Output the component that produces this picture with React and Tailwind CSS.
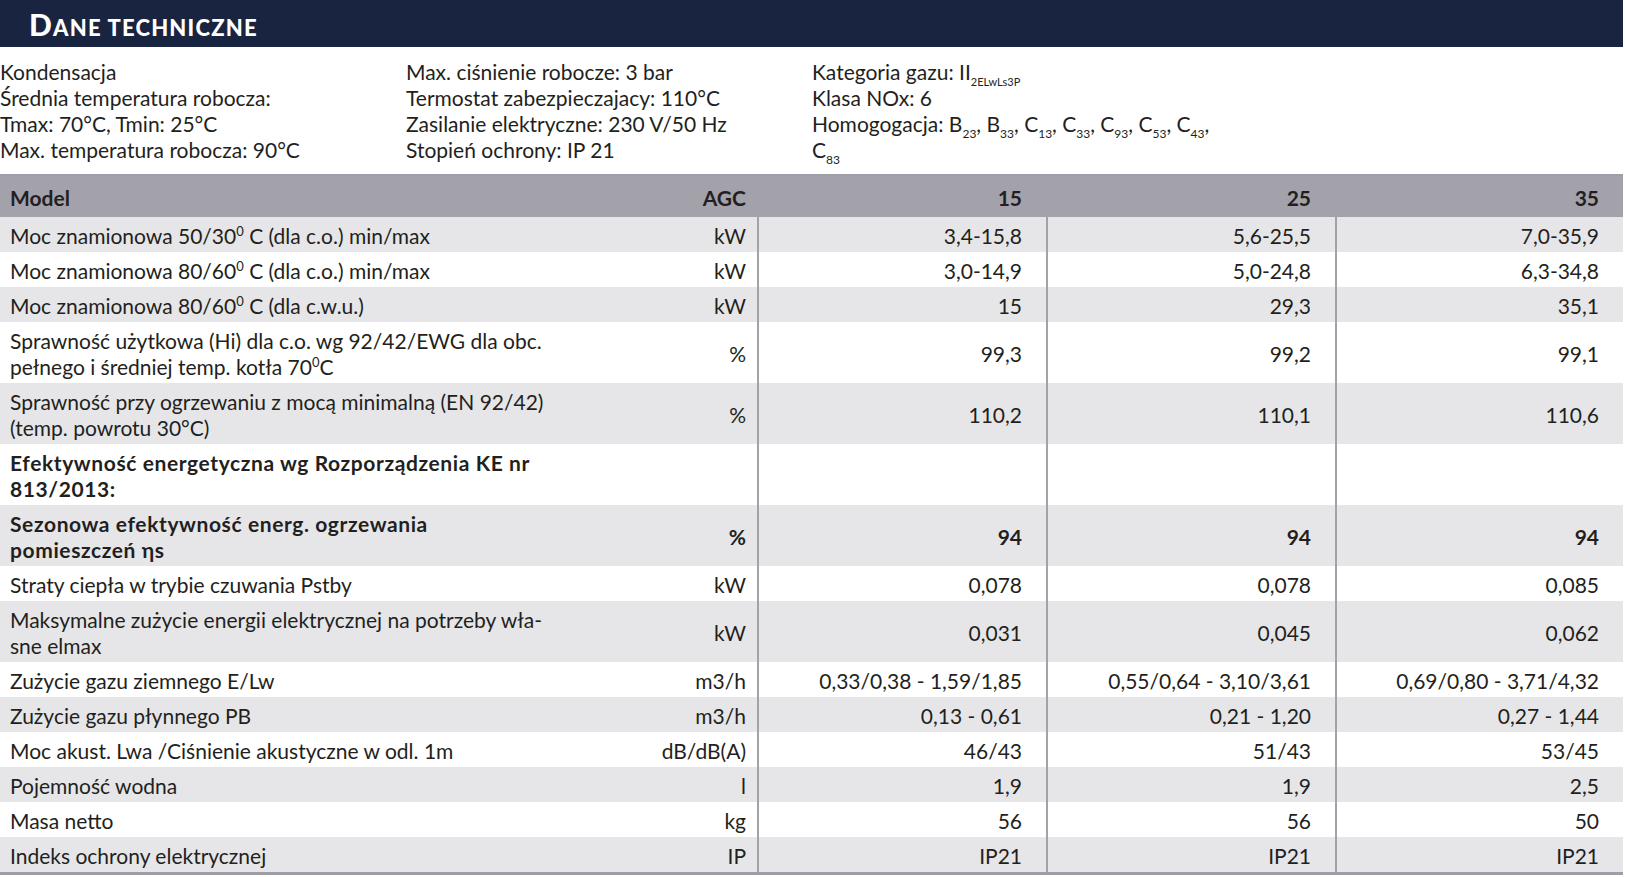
import React from "react";

const FONT = { fontFamily: "Lato, 'Noto Sans', sans-serif" };

const ROWS = [
  { label: <>Moc znamionowa 50/30<sup className="text-[13px] -top-[8px]">0</sup> C (dla c.o.) min/max</>, unit: "kW", v: ["3,4-15,8", "5,6-25,5", "7,0-35,9"] },
  { label: <>Moc znamionowa 80/60<sup className="text-[13px] -top-[8px]">0</sup> C (dla c.o.) min/max</>, unit: "kW", v: ["3,0-14,9", "5,0-24,8", "6,3-34,8"] },
  { label: <>Moc znamionowa 80/60<sup className="text-[13px] -top-[8px]">0</sup> C (dla c.w.u.)</>, unit: "kW", v: ["15", "29,3", "35,1"] },
  {
    label: <>Sprawność użytkowa (Hi) dla c.o. wg 92/42/EWG dla obc.<br />pełnego i średniej temp. kotła 70<sup className="text-[13px] -top-[8px]">0</sup>C</>,
    unit: "%",
    v: ["99,3", "99,2", "99,1"],
  },
  {
    label: <>Sprawność przy ogrzewaniu z mocą minimalną (EN 92/42)<br />(temp. powrotu 30°C)</>,
    unit: "%",
    v: ["110,2", "110,1", "110,6"],
  },
  {
    label: <>Efektywność energetyczna wg Rozporządzenia KE nr<br />813/2013:</>,
    unit: "",
    v: ["", "", ""],
    bold: true,
  },
  {
    label: <>Sezonowa efektywność energ. ogrzewania<br />pomieszczeń ηs</>,
    unit: "%",
    v: ["94", "94", "94"],
    bold: true,
  },
  { label: "Straty ciepła w trybie czuwania Pstby", unit: "kW", v: ["0,078", "0,078", "0,085"] },
  {
    label: <>Maksymalne zużycie energii elektrycznej na potrzeby wła-<br />sne elmax</>,
    unit: "kW",
    v: ["0,031", "0,045", "0,062"],
  },
  { label: "Zużycie gazu ziemnego E/Lw", unit: "m3/h", v: ["0,33/0,38 - 1,59/1,85", "0,55/0,64 - 3,10/3,61", "0,69/0,80 - 3,71/4,32"] },
  { label: "Zużycie gazu płynnego PB", unit: "m3/h", v: ["0,13 - 0,61", "0,21 - 1,20", "0,27 - 1,44"] },
  { label: "Moc akust. Lwa /Ciśnienie akustyczne w odl. 1m", unit: "dB/dB(A)", v: ["46/43", "51/43", "53/45"] },
  { label: "Pojemność wodna", unit: "l", v: ["1,9", "1,9", "2,5"] },
  { label: "Masa netto", unit: "kg", v: ["56", "56", "50"] },
  { label: "Indeks ochrony elektrycznej", unit: "IP", v: ["IP21", "IP21", "IP21"] },
];

function Sub({ children }) {
  return <sub className="text-[12px] -bottom-[6px]">{children}</sub>;
}

export default function App() {
  return (
    <div className="w-[1623px] bg-white text-[#231f20] text-[21px] leading-[26px]" style={FONT}>
      <div className="h-[47px] bg-[#182440] flex items-center pl-[29px]">
        <h1 className="text-white font-black leading-none tracking-[1.2px]">
          <span className="text-[30px]">D</span>
          <span className="text-[22px]">ANE TECHNICZNE</span>
        </h1>
      </div>

      <div className="grid grid-cols-[406px_406px_1fr] pt-[12px] pb-[11px]">
        <div>
          <p>Kondensacja</p>
          <p>Średnia temperatura robocza:</p>
          <p>Tmax: 70°C, Tmin: 25°C</p>
          <p>Max. temperatura robocza: 90°C</p>
        </div>
        <div>
          <p>Max. ciśnienie robocze: 3 bar</p>
          <p>Termostat zabezpieczajacy: 110°C</p>
          <p>Zasilanie elektryczne: 230 V/50 Hz</p>
          <p>Stopień ochrony: IP 21</p>
        </div>
        <div>
          <p>
            Kategoria gazu: II<sub className="text-[11px] -bottom-[6px]">2ELwLs3P</sub>
          </p>
          <p>Klasa NOx: 6</p>
          <p>
            Homogogacja: B<Sub>23</Sub>, B<Sub>33</Sub>, C<Sub>13</Sub>, C<Sub>33</Sub>, C<Sub>93</Sub>, C<Sub>53</Sub>, C<Sub>43</Sub>,
          </p>
          <p>
            C<Sub>83</Sub>
          </p>
        </div>
      </div>

      <div className="border-t-2 border-b-[3px] border-[#9f9ea8]">
        <div className="grid grid-cols-[580px_177px_289px_289px_288px] h-[41px] items-center bg-[#a3a2ab] font-bold pt-[2px]">
          <div className="pl-[10px]">Model</div>
          <div className="text-right pr-[11px]">AGC</div>
          <div className="text-right pr-[24px]">15</div>
          <div className="text-right pr-[24px]">25</div>
          <div className="text-right pr-[24px]">35</div>
        </div>

        {ROWS.map((r, i) => (
          <div
            key={i}
            className={`grid grid-cols-[580px_177px_289px_289px_288px] ${i % 2 === 0 ? "bg-[#e6e6e8]" : "bg-white"} ${r.bold ? "font-bold tracking-[0.6px]" : ""}`}
          >
            <div className="pl-[10px] pt-[6px] pb-[3px]">{r.label}</div>
            <div className="flex items-center justify-end pr-[11px] pt-[3px] tracking-normal">{r.unit}</div>
            {r.v.map((val, j) => (
              <div key={j} className="flex items-center justify-end pr-[24px] pt-[3px] tracking-normal border-l-2 border-[#a3a2ab]">
                {val}
              </div>
            ))}
          </div>
        ))}
      </div>
    </div>
  );
}
